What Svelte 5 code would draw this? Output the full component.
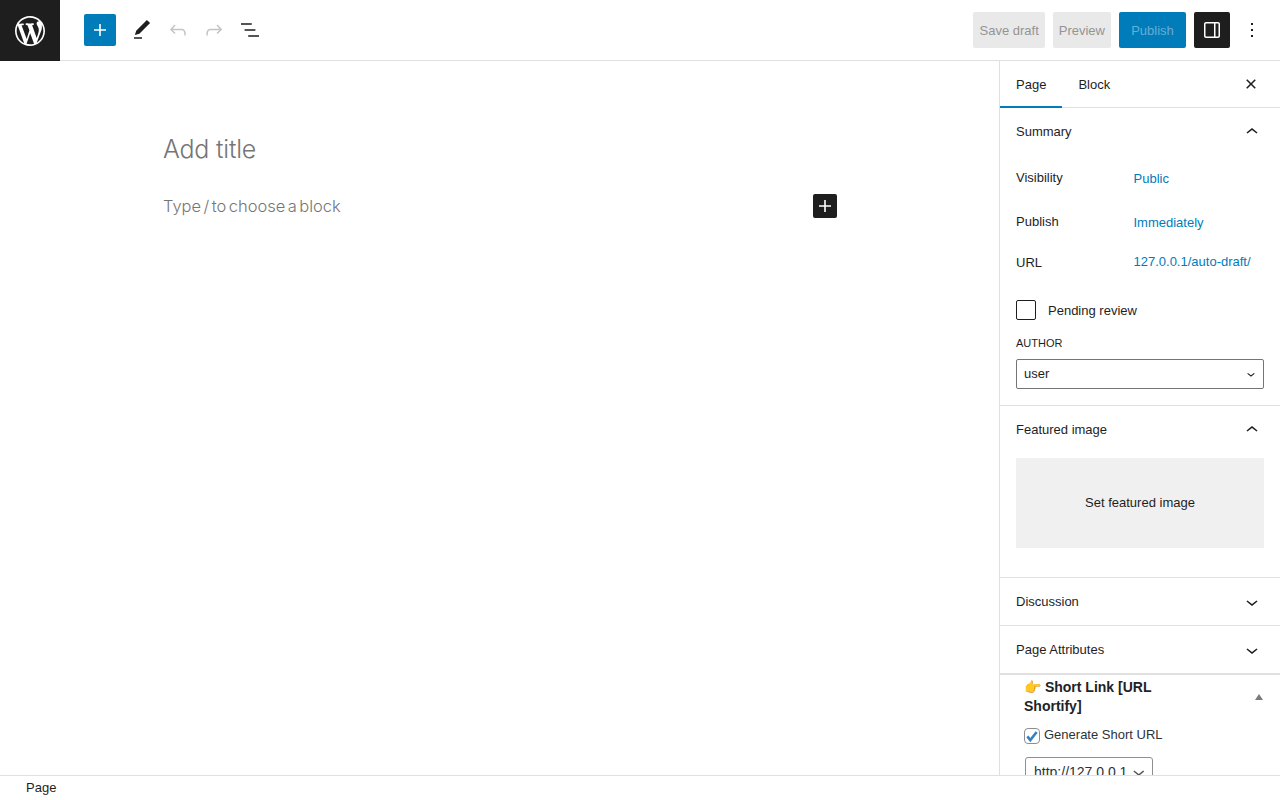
<script>
	const icons = {
		plus: 'M18 11.2h-5.2V6h-1.6v5.2H6v1.6h5.2V18h1.6v-5.2H18z',
		pencil: 'M20.1 5.1L16.9 2 6.2 12.7l-1.3 4.4 4.5-1.3L20.1 5.1zM4 20.8h8v-1.5H4v1.5z',
		undo: 'M18.3 11.7c-.6-.6-1.4-.9-2.3-.9H6.7l2.9-3.3-1.1-1-4.5 5L8.5 16l1-1-2.7-2.7H16c.5 0 .9.2 1.3.5 1 1 1 3.4 1 4.5v.3h1.5v-.2c0-1.5 0-4.3-1.5-5.7z',
		redo: 'M15.6 6.5l-1.1 1 2.9 3.3H8c-.9 0-1.7.3-2.3.9-1.4 1.5-1.4 4.2-1.4 5.6v.2h1.5v-.3c0-1.1 0-3.5 1-4.5.3-.3.7-.5 1.3-.5h9.2L14.5 15l1.1 1.1 4.6-4.6-4.6-5z',
		list: 'M13.8 5.2H3v1.5h10.8V5.2zm-3.6 12v1.5H21v-1.5H10.2zm7.2-6H6.6v1.5h10.8v-1.5z',
		sidebar: 'M18 4H6c-1.1 0-2 .9-2 2v12c0 1.1.9 2 2 2h12c1.1 0 2-.9 2-2V6c0-1.1-.9-2-2-2zm-4 14.5H6c-.3 0-.5-.2-.5-.5V6c0-.3.2-.5.5-.5h8v13zm4.5-.5c0 .3-.2.5-.5.5h-2.5v-13H18c.3 0 .5.2.5.5v12z',
		more: 'M13 19h-2v-2h2v2zm0-6h-2v-2h2v2zm0-6h-2V5h2v2z',
		close: 'M12 13.06l3.712 3.713 1.061-1.06L13.061 12l3.712-3.712-1.06-1.06L12 10.938 8.288 7.227l-1.061 1.06L10.939 12l-3.712 3.712 1.06 1.061L12 13.061z',
		up: 'M6.5 12.4L12 8l5.5 4.4-.9 1.2L12 10l-4.5 3.6-1-1.2z',
		down: 'M17.5 11.6L12 16l-5.5-4.4.9-1.2L12 14l4.5-3.6 1 1.2z'
	};
	const wp = 'M20 10c0-5.51-4.49-10-10-10C4.48 0 0 4.49 0 10c0 5.52 4.48 10 10 10 5.51 0 10-4.48 10-10zM7.78 15.37L4.37 6.22c.55-.02 1.17-.08 1.17-.08.5-.06.44-1.13-.06-1.11 0 0-1.45.11-2.37.11-.18 0-.37 0-.58-.01C4.12 2.69 6.87 1.11 10 1.11c2.33 0 4.45.87 6.05 2.34-.68-.11-1.65.39-1.65 1.58 0 .74.45 1.36.9 2.1.35.61.55 1.36.55 2.46 0 1.49-1.4 5-1.4 5l-3.03-8.37c.54-.02.82-.17.82-.17.5-.05.44-1.25-.06-1.22 0 0-1.44.12-2.38.12-.87 0-2.33-.12-2.33-.12-.5-.03-.56 1.2-.06 1.22l.92.08 1.26 3.41zM17.41 10c.24-.64.74-1.87.43-4.25.7 1.29 1.05 2.71 1.05 4.25 0 3.29-1.73 6.24-4.4 7.78.97-2.59 1.94-5.2 2.92-7.78zM6.1 18.09C3.12 16.65 1.11 13.53 1.11 10c0-1.3.23-2.48.72-3.59C3.25 10.3 4.67 14.2 6.1 18.09zm4.03-6.63l2.58 6.98c-.86.29-1.76.45-2.71.45-.79 0-1.57-.11-2.29-.33.81-2.38 1.62-4.74 2.42-7.1z';
</script>

{#snippet icon(name, size = 24)}
	<svg width={size} height={size} viewBox="0 0 24 24" fill="currentColor"><path d={icons[name]} /></svg>
{/snippet}

<div class="shell">
	<header class="top">
		<div class="logo">
			<svg width="30" height="30" viewBox="0 0 20 20" fill="#fff"><path d={wp} /></svg>
		</div>
		<div class="tools">
			<button class="add">{@render icon('plus')}</button>
			<button class="tool">{@render icon('pencil')}</button>
			<button class="tool off">{@render icon('undo')}</button>
			<button class="tool off">{@render icon('redo')}</button>
			<button class="tool">{@render icon('list')}</button>
		</div>
		<div class="actions">
			<button class="grey">Save draft</button>
			<button class="grey">Preview</button>
			<button class="publish">Publish</button>
			<button class="toggle">{@render icon('sidebar')}</button>
			<button class="tool more">{@render icon('more')}</button>
		</div>
	</header>

	<div class="main">
		<main class="editor">
			<div class="canvas">
				<h1>Add title</h1>
				<div class="para">
					<p>Type / to choose a block</p>
					<button class="inserter">{@render icon('plus')}</button>
				</div>
			</div>
		</main>

		<aside class="side">
			<div class="tabs">
				<button class="tab active">Page</button>
				<button class="tab">Block</button>
				<button class="tool close">{@render icon('close')}</button>
			</div>

			<section class="panel summary">
				<div class="panel-head">Summary {@render icon('up')}</div>
				<div class="row first"><span>Visibility</span><a href="#v">Public</a></div>
				<div class="row second"><span>Publish</span><a href="#p">Immediately</a></div>
				<div class="row third"><span>URL</span><a href="#u">127.0.0.1/auto-draft/</a></div>
				<label class="pending"><span class="check"></span>Pending review</label>
				<div class="author-label">AUTHOR</div>
				<div class="select"><span class="select-value">user</span>
					<svg width="16" height="16" viewBox="0 0 24 24" fill="currentColor"><path d={icons.down} /></svg>
				</div>
			</section>

			<section class="panel featured">
				<div class="panel-head">Featured image {@render icon('up')}</div>
				<button class="set-image">Set featured image</button>
			</section>

			<section class="panel">
				<div class="panel-head">Discussion {@render icon('down')}</div>
			</section>

			<section class="panel">
				<div class="panel-head">Page Attributes {@render icon('down')}</div>
			</section>

			<section class="meta">
				<div class="meta-head">
					<h2>👉 Short Link [URL Shortify]</h2>
					<span class="caret"></span>
				</div>
				<label class="generate">
					<span class="tick">
						<svg width="16" height="16" viewBox="0 0 24 24" fill="none" stroke="#3582c4" stroke-width="4"><path d="M5 12.5l4.5 5.5L19 6" /></svg>
					</span>
					Generate Short URL
				</label>
				<div class="url-select">http://127.0.0.1
					<svg width="24" height="24" viewBox="0 0 24 24" fill="#50575e"><path d={icons.down} /></svg>
				</div>
			</section>
		</aside>
	</div>

	<footer class="foot">Page</footer>
</div>

<style>
	:global(body) {
		font-family: "Liberation Sans", Arial, sans-serif;
		font-size: 13px;
		color: #1e1e1e;
		background: #fff;
		overflow: hidden;
	}

	button {
		font: inherit;
		border: 0;
		background: none;
		color: inherit;
		padding: 0;
		display: flex;
		align-items: center;
		justify-content: center;
	}

	.shell {
		height: 800px;
		display: flex;
		flex-direction: column;
	}

	.top {
		height: 60px;
		flex: none;
		display: flex;
		align-items: center;
		border-bottom: 1px solid #e0e0e0;
		box-sizing: content-box;
	}

	.logo {
		width: 60px;
		height: 61px;
		margin-bottom: -1px;
		background: #1e1e1e;
		display: flex;
		align-items: center;
		justify-content: center;
		flex: none;
	}

	.tools {
		display: flex;
		align-items: center;
		margin-left: 24px;
		gap: 4px;
	}

	.add {
		width: 32px;
		height: 32px;
		background: #007cba;
		color: #fff;
		border-radius: 2px;
		margin-right: 6px;
	}

	.tool {
		width: 32px;
		height: 32px;
	}

	.off {
		color: #c4c4c4;
	}

	.actions {
		margin-left: auto;
		display: flex;
		align-items: center;
		gap: 8px;
		padding-right: 17px;
	}

	.grey {
		height: 36px;
		padding: 0 6px;
		background: #e9e9e9;
		color: #949494;
		border-radius: 2px;
	}

	.publish {
		height: 36px;
		width: 67px;
		background: #007cba;
		color: #66afd5;
		border-radius: 2px;
	}

	.toggle {
		width: 36px;
		height: 36px;
		background: #1e1e1e;
		color: #fff;
		border-radius: 2px;
	}

	.more {
		width: 28px;
		margin-right: -3px;
	}

	.main {
		flex: 1;
		min-height: 0;
		display: flex;
	}

	.editor {
		flex: 1;
		min-width: 0;
	}

	.canvas {
		width: 674px;
		margin: 0 0 0 163px;
		padding-top: 70px;
		color: #757575;
		font-family: Inter, sans-serif;
		font-weight: 300;
	}

	h1 {
		margin: 0;
		font-size: 25px;
		font-weight: 300;
		line-height: 36px;
		letter-spacing: -0.2px;
	}

	.para {
		margin-top: 25px;
		height: 28px;
		display: flex;
		align-items: center;
		justify-content: space-between;
	}

	.para p {
		margin: 0;
		font-size: 16.5px;
		letter-spacing: -0.05px;
		word-spacing: -2px;
	}

	.inserter {
		width: 24px;
		height: 24px;
		background: #1e1e1e;
		color: #fff;
		border-radius: 2px;
	}

	.side {
		width: 281px;
		flex: none;
		box-sizing: border-box;
		border-left: 1px solid #e0e0e0;
		overflow: hidden;
	}

	.tabs {
		height: 46px;
		display: flex;
		align-items: stretch;
		border-bottom: 1px solid #e0e0e0;
		box-sizing: content-box;
	}

	.tab {
		padding: 0 16px;
		margin-bottom: -1px;
	}

	.tab.active {
		box-shadow: inset 0 -2px 0 #007cba;
	}

	.close {
		margin: 7px 13px 0 auto;
		width: 32px;
		height: 32px;
	}

	.panel {
		border-bottom: 1px solid #e0e0e0;
	}

	.panel-head {
		height: 47px;
		padding: 0 16px;
		display: flex;
		align-items: center;
		justify-content: space-between;
	}

	.summary {
		padding-bottom: 16px;
	}

	.row {
		display: grid;
		grid-template-columns: 117.5px 1fr;
		padding: 0 16px;
		line-height: 18px;
	}

	.row a {
		color: #007cba;
		text-decoration: none;
	}

	.row.first {
		margin-top: 14px;
	}

	.row.first a,
	.row.second a {
		position: relative;
		top: 1px;
	}

	.row.second {
		margin-top: 26px;
	}

	.row.third {
		margin-top: 22px;
	}

	.row.third span {
		position: relative;
		top: 1px;
	}

	.pending {
		display: flex;
		align-items: center;
		gap: 12px;
		padding: 0 16px;
		margin-top: 29px;
	}

	.check {
		width: 20px;
		height: 20px;
		box-sizing: border-box;
		border: 1px solid #1e1e1e;
		border-radius: 2px;
	}

	.author-label {
		margin: 16px 16px 0;
		font-size: 11px;
		line-height: 14px;
	}

	.select {
		margin: 9px 16px 0;
		height: 30px;
		box-sizing: border-box;
		border: 1px solid #757575;
		border-radius: 2px;
		padding: 0 4px 0 7px;
		display: flex;
		align-items: center;
		justify-content: space-between;
	}

	.select-value {
		margin-bottom: 2px;
	}

	.featured {
		padding-bottom: 29px;
	}

	.set-image {
		width: 248px;
		height: 90px;
		margin: 5px 16px 0;
		padding-bottom: 2px;
		background: #f0f0f0;
	}

	.meta {
		border-top: 1px solid #e0e0e0;
		padding: 0 16px 0 24px;
	}

	.meta-head {
		display: flex;
		justify-content: space-between;
		align-items: flex-start;
	}

	h2 {
		margin: 3px 0 0;
		width: 170px;
		font-size: 14px;
		line-height: 19px;
		font-weight: 700;
		color: #1d2327;
	}

	.caret {
		width: 0;
		height: 0;
		margin: 19px 1px 0 0;
		border-left: 4px solid transparent;
		border-right: 4px solid transparent;
		border-bottom: 6px solid #787c82;
	}

	.generate {
		display: flex;
		align-items: center;
		gap: 4px;
		margin-top: 10px;
		color: #2c3338;
		line-height: 18px;
	}

	.tick {
		width: 16px;
		height: 16px;
		box-sizing: border-box;
		border: 1px solid #8c8f94;
		border-radius: 4px;
		display: flex;
		align-items: center;
		justify-content: center;
		position: relative;
		top: 1px;
	}

	.tick svg {
		flex: none;
	}

	.url-select {
		width: 128px;
		height: 30px;
		box-sizing: border-box;
		margin: 13px 0 0 1px;
		border: 1px solid #8c8f94;
		border-radius: 3px;
		padding: 0 1px 0 8px;
		display: flex;
		align-items: center;
		justify-content: space-between;
		font-size: 14px;
		color: #2c3338;
	}

	.foot {
		height: 24px;
		flex: none;
		border-top: 1px solid #e0e0e0;
		padding-left: 26px;
		line-height: 24px;
		background: #fff;
	}
</style>
